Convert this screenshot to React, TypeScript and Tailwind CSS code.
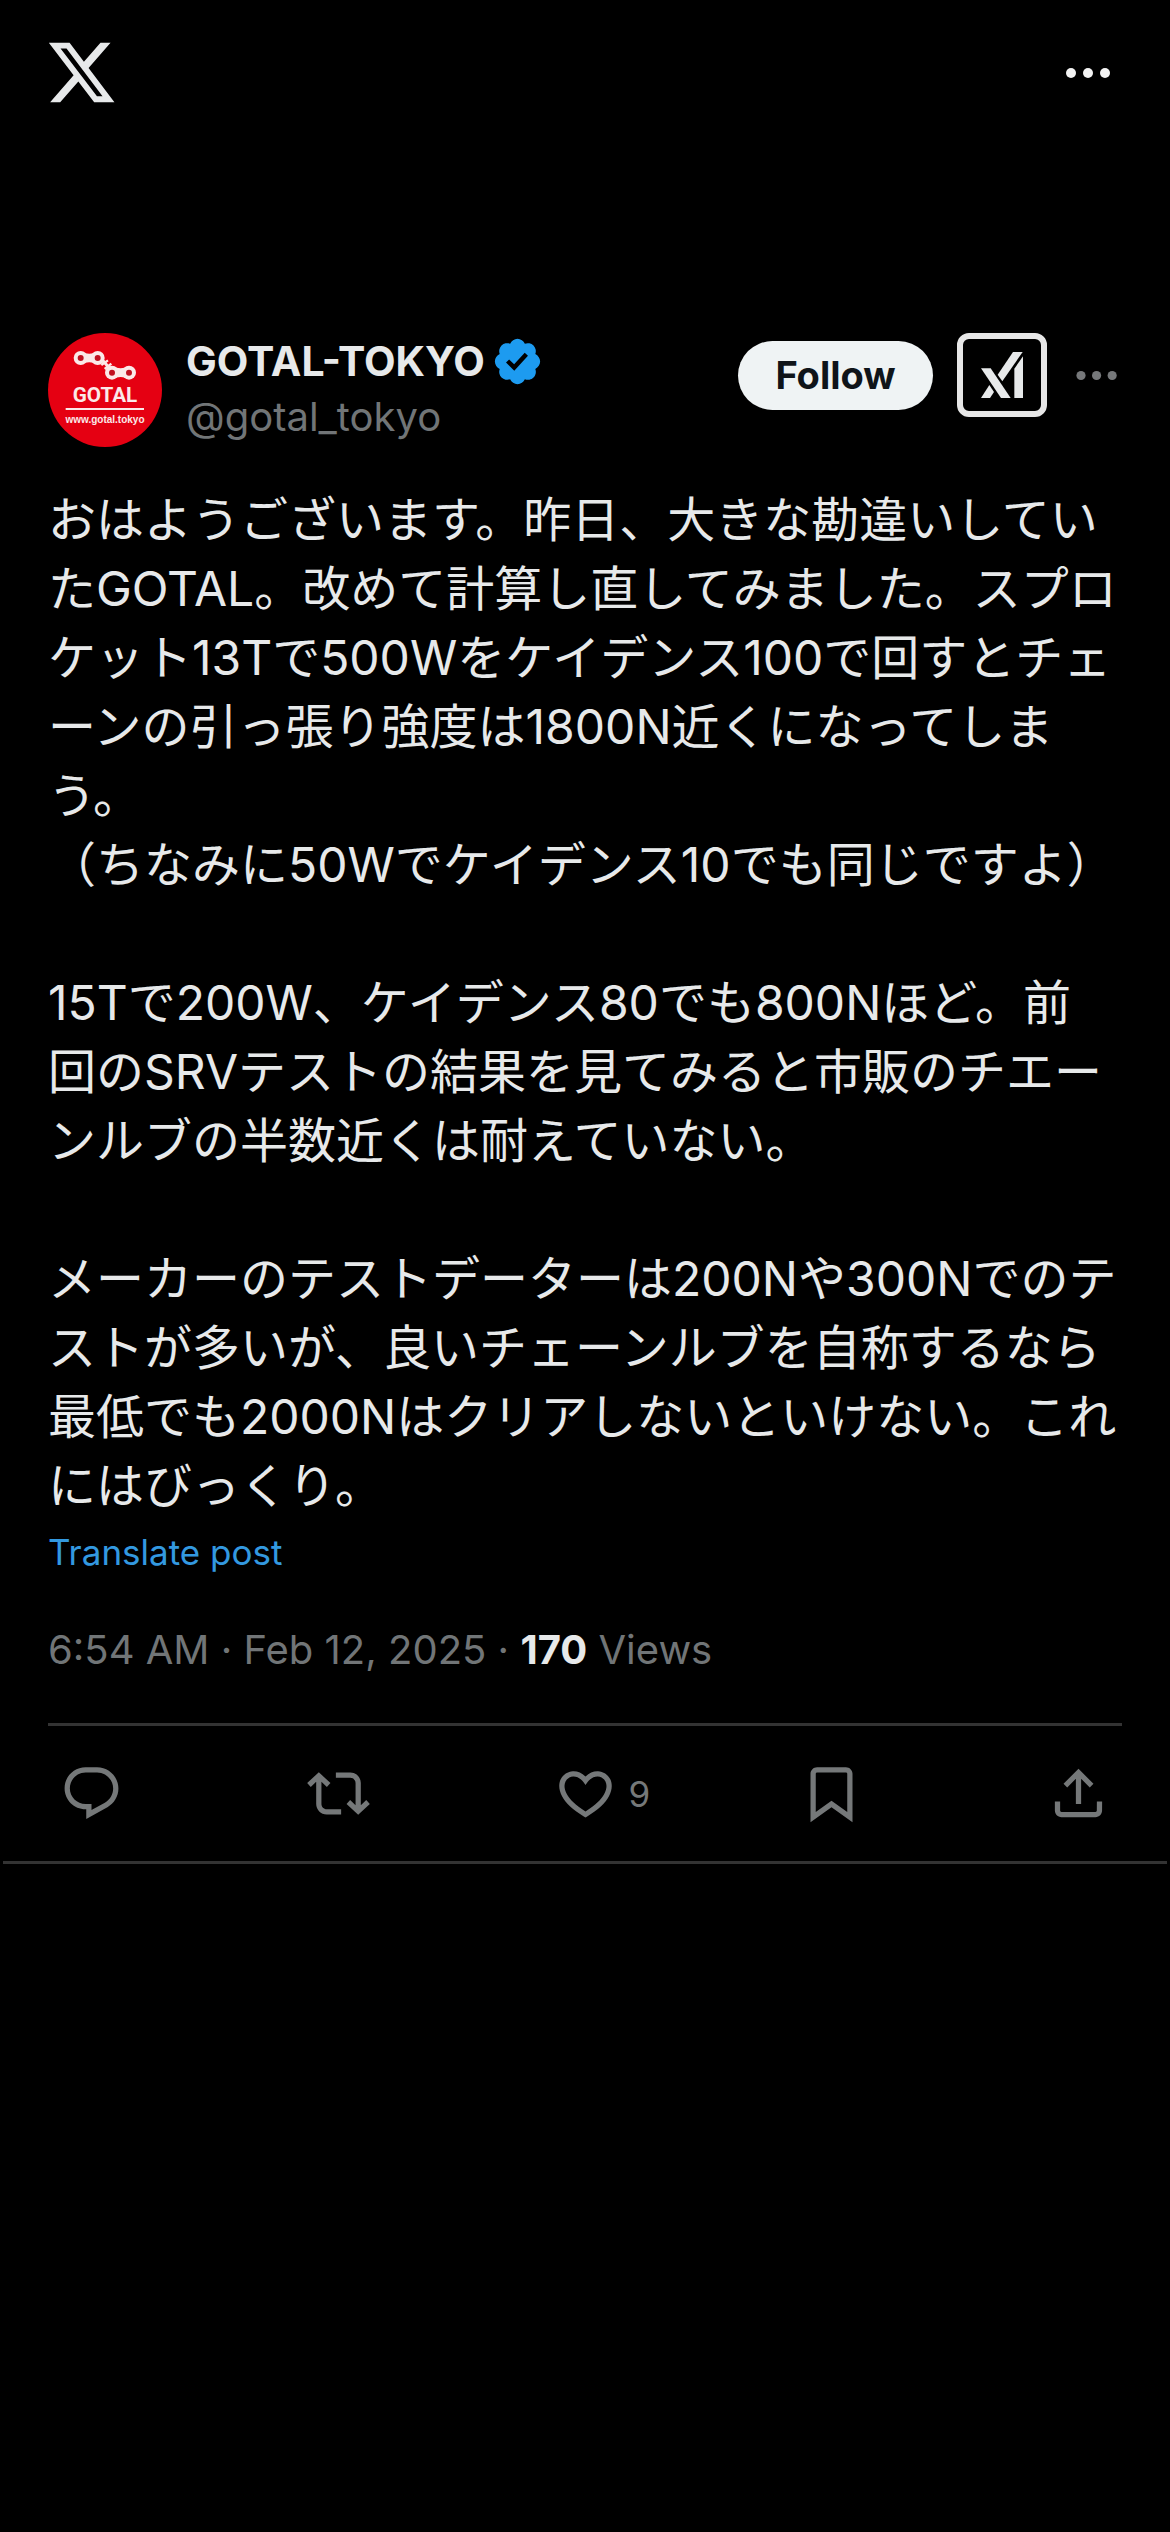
import React from "react";

const PATHS = {
  logo: "M18.244 2.25h3.308l-7.227 8.26 8.502 11.24H16.17l-5.214-6.817L4.99 21.75H1.68l7.73-8.835L1.254 2.25H8.08l4.713 6.231zm-1.161 17.52h1.833L7.084 4.126H5.117z",
  reply:
    "M1.751 10c0-4.42 3.584-8 8.005-8h4.366c4.49 0 8.129 3.64 8.129 8.13 0 2.96-1.607 5.68-4.196 7.11l-8.054 4.46v-3.69h-.067c-4.49.1-8.183-3.51-8.183-8.01zm8.005-6c-3.317 0-6.005 2.69-6.005 6 0 3.37 2.77 6.08 6.138 6.01l.351-.01h1.761v2.3l5.087-2.81c1.951-1.08 3.163-3.13 3.163-5.36 0-3.39-2.744-6.13-6.129-6.13H9.756z",
  repost:
    "M4.5 3.88l4.432 4.14-1.364 1.46L5.5 7.55V16c0 1.1.896 2 2 2H13v2H7.5c-2.209 0-4-1.79-4-4V7.55L1.432 9.48.068 8.02 4.5 3.88zM16.5 6H11V4h5.5c2.209 0 4 1.79 4 4v8.45l2.068-1.93 1.364 1.46-4.432 4.14-4.432-4.14 1.364-1.46 2.068 1.93V8c0-1.1-.896-2-2-2z",
  like: "M16.697 5.5c-1.222-.06-2.679.51-3.89 2.16l-.805 1.09-.806-1.09C9.984 6.01 8.526 5.44 7.304 5.5c-1.243.07-2.349.78-2.91 1.91-.552 1.12-.633 2.78.479 4.82 1.074 1.97 3.257 4.27 7.129 6.61 3.87-2.34 6.052-4.64 7.126-6.61 1.111-2.04 1.03-3.7.477-4.82-.561-1.13-1.666-1.84-2.908-1.91zm4.187 7.69c-1.351 2.48-4.001 5.12-8.379 7.67l-.503.3-.504-.3c-4.379-2.55-7.029-5.19-8.382-7.67-1.36-2.5-1.41-4.86-.514-6.67.887-1.79 2.647-2.91 4.601-3.01 1.651-.09 3.368.56 4.798 2.01 1.429-1.45 3.146-2.1 4.796-2.01 1.954.1 3.714 1.22 4.601 3.01.896 1.81.846 4.17-.514 6.67z",
  bookmark:
    "M4 4.5C4 3.12 5.119 2 6.5 2h11C18.881 2 20 3.12 20 4.5v18.44l-8-5.71-8 5.71V4.5zM6.5 4c-.276 0-.5.22-.5.5v14.56l6-4.29 6 4.29V4.5c0-.28-.224-.5-.5-.5h-11z",
  share:
    "M12 2.59l5.7 5.7-1.41 1.42L13 6.41V16h-2V6.41l-3.3 3.3-1.41-1.42L12 2.59zM21 15l-.02 3.51c0 1.38-1.12 2.49-2.5 2.49H5.5C4.11 21 3 19.88 3 18.5V15h2v3.5c0 .28.22.5.5.5h12.98c.28 0 .5-.22.5-.5L19 15h2z",
  verified:
    "M20.396 11c-.018-.646-.215-1.275-.57-1.816-.354-.54-.852-.972-1.438-1.246.223-.607.27-1.264.14-1.897-.131-.634-.437-1.218-.882-1.687-.47-.445-1.053-.75-1.687-.882-.633-.13-1.29-.083-1.897.14-.273-.587-.704-1.086-1.245-1.44S11.647 1.62 11 1.604c-.646.017-1.273.213-1.813.568s-.969.854-1.24 1.44c-.608-.223-1.267-.272-1.902-.14-.635.13-1.22.436-1.69.882-.445.47-.749 1.055-.878 1.688-.13.633-.08 1.29.144 1.896-.587.274-1.087.705-1.443 1.245-.356.54-.555 1.17-.574 1.817.02.647.218 1.276.574 1.817.356.54.856.972 1.443 1.245-.224.606-.274 1.263-.144 1.896.13.634.433 1.218.877 1.688.47.443 1.054.747 1.687.878.633.132 1.29.084 1.897-.136.274.586.705 1.084 1.246 1.439.54.354 1.17.551 1.816.569.647-.016 1.276-.213 1.817-.567s.972-.854 1.245-1.44c.604.239 1.266.296 1.903.164.636-.132 1.22-.447 1.68-.907.46-.46.776-1.044.908-1.681s.075-1.299-.165-1.903c.586-.274 1.084-.705 1.439-1.246.354-.54.551-1.17.569-1.816zM9.662 14.85l-3.429-3.428 1.293-1.302 2.072 2.072 4.4-4.794 1.347 1.246z",
};

const BODY = `おはようございます。昨日、大きな勘違いしていたGOTAL。改めて計算し直してみました。スプロケット13Tで500Wをケイデンス100で回すとチェーンの引っ張り強度は1800N近くになってしまう。
（ちなみに50Wでケイデンス10でも同じですよ）

15Tで200W、ケイデンス80でも800Nほど。前
回のSRVテストの結果を見てみると市販のチエーンルブの半数近くは耐えていない。

メーカーのテストデーターは200Nや300Nでのテストが多いが、良いチェーンルブを自称するなら最低でも2000Nはクリアしないといけない。これにはびっくり。`;

function Dots({ className }: { className: string }) {
  return (
    <svg viewBox="0 0 48 12" className={className} fill="currentColor" aria-hidden="true">
      <circle cx="6" cy="6" r="5" />
      <circle cx="23" cy="6" r="5" />
      <circle cx="40" cy="6" r="5" />
    </svg>
  );
}

function Avatar() {
  return (
    <svg viewBox="0 0 342 342" className="size-[114px] shrink-0" role="img" aria-label="GOTAL-TOKYO">
      <circle cx="171" cy="171" r="171" fill="#e50012" />
      <path d="M166 84l20 24" stroke="#fbe9e9" strokeWidth="9" />
      <path d="M160 96l20-14M170 108l20-16" stroke="#fbe9e9" strokeWidth="7" />
      <g fill="#fbe9e9">
        <circle cx="98" cy="75" r="21" />
        <circle cx="149" cy="75" r="21" />
        <path d="M98 56Q124 68 149 56V94Q124 82 98 94z" />
        <circle cx="192" cy="119" r="21" />
        <circle cx="243" cy="119" r="21" />
        <path d="M192 100Q218 112 243 100V138Q218 126 192 138z" />
        <rect x="53" y="225" width="235" height="6" />
      </g>
      <g fill="#c01020">
        <circle cx="98" cy="75" r="9" />
        <circle cx="149" cy="75" r="9" />
        <circle cx="192" cy="119" r="9" />
        <circle cx="243" cy="119" r="9" />
      </g>
      <text
        x="171"
        y="206"
        textAnchor="middle"
        fill="#fbe9e9"
        className="font-['Liberation_Sans_Narrow','Roboto',sans-serif] text-[62px] font-bold"
      >
        GOTAL
      </text>
      <text
        x="171"
        y="271"
        textAnchor="middle"
        fill="#fbe9e9"
        className="font-['Liberation_Sans',sans-serif] text-[30px] font-bold"
      >
        www.gotal.tokyo
      </text>
    </svg>
  );
}

function GrokMark() {
  return (
    <svg viewBox="0 0 126 138" className="h-[46px] w-[42px]" fill="currentColor" aria-hidden="true">
      <path d="M96 0h29L64 88 50 68z" />
      <path d="M0 49h29l60 89H60z" />
      <path d="M25 99l14 21-12 18H0z" />
      <path d="M126 13v125h-26V50z" />
    </svg>
  );
}

function Action({ label, path, count }: { label: string; path: string; count?: number }) {
  return (
    <button type="button" aria-label={label} className="flex w-[63px] items-center gap-3">
      <svg viewBox="0 0 24 24" className="size-[63px] shrink-0" fill="currentColor" aria-hidden="true">
        <path d={path} />
      </svg>
      {count !== undefined && <span className="text-[35px] leading-[48px]">{count}</span>}
    </button>
  );
}

export default function App() {
  return (
    <div className="min-h-screen bg-black font-['Inter','Noto_Sans_CJK_JP',sans-serif] text-[#e7e9ea]">
      <header className="flex items-start justify-between pt-9 pr-[57px] pl-[45px]">
        <a href="#home" aria-label="X">
          <svg viewBox="0 0 24 24" className="size-[73px]" fill="currentColor" aria-hidden="true">
            <path d={PATHS.logo} />
          </svg>
        </a>
        <button type="button" aria-label="More options" className="flex h-[73px] items-center text-[#f3f3f3]">
          <Dots className="h-3 w-12" />
        </button>
      </header>

      <main className="pt-6">
        <article className="pt-[200px]">
          <div className="px-12">
            <div className="flex items-start">
              <Avatar />
              <div className="ml-6 min-w-0 grow">
                <div className="flex items-center gap-1.5">
                  <span className="text-[41px] leading-[56px] font-bold">GOTAL-TOKYO</span>
                  <svg viewBox="0 0 22 22" className="size-[53px] shrink-0 text-[#1d9bf0]" fill="currentColor" role="img" aria-label="Verified account">
                    <path d={PATHS.verified} />
                  </svg>
                </div>
                <div className="text-[40px] leading-[56px] text-[#717577]">@gotal_tokyo</div>
              </div>
              <div className="flex items-center gap-6 pr-0.5">
                <button
                  type="button"
                  className="h-[69px] w-[195px] rounded-full bg-[#eff3f4] text-[38px] leading-[56px] font-bold text-[#0f1419]"
                >
                  Follow
                </button>
                <button
                  type="button"
                  aria-label="Explain this post"
                  className="flex h-[84px] w-[90px] items-center justify-center rounded-xl border-6 border-[#e7e7e7] text-[#e7e9ea]"
                >
                  <GrokMark />
                </button>
                <button type="button" aria-label="More" className="pl-1 text-[#76787a]">
                  <Dots className="h-[11px] w-[45px]" />
                </button>
              </div>
            </div>

            <p lang="ja" className="mt-[38px] text-[48px] leading-[69px] whitespace-pre-wrap">
              {BODY}
            </p>
            <button type="button" className="mt-2 block text-[35px] leading-[48px] text-[#3399e0]">
              Translate post
            </button>
            <div className="my-[45px] text-[40px] leading-[57px] text-[#717577]">
              <time dateTime="2025-02-12T06:54">6:54 AM · Feb 12, 2025</time> ·{" "}
              <span className="font-bold text-[#e7e9ea]">170</span> Views
            </div>
            <div className="flex justify-between border-t-3 border-[#333333] px-3 py-9 text-[#757879]">
              <Action label="Reply" path={PATHS.reply} />
              <Action label="Repost" path={PATHS.repost} />
              <Action label="Like" path={PATHS.like} count={9} />
              <Action label="Bookmark" path={PATHS.bookmark} />
              <Action label="Share" path={PATHS.share} />
            </div>
          </div>
          <hr className="mx-[3px] border-t-3 border-[#333333]" />
        </article>
      </main>
    </div>
  );
}
